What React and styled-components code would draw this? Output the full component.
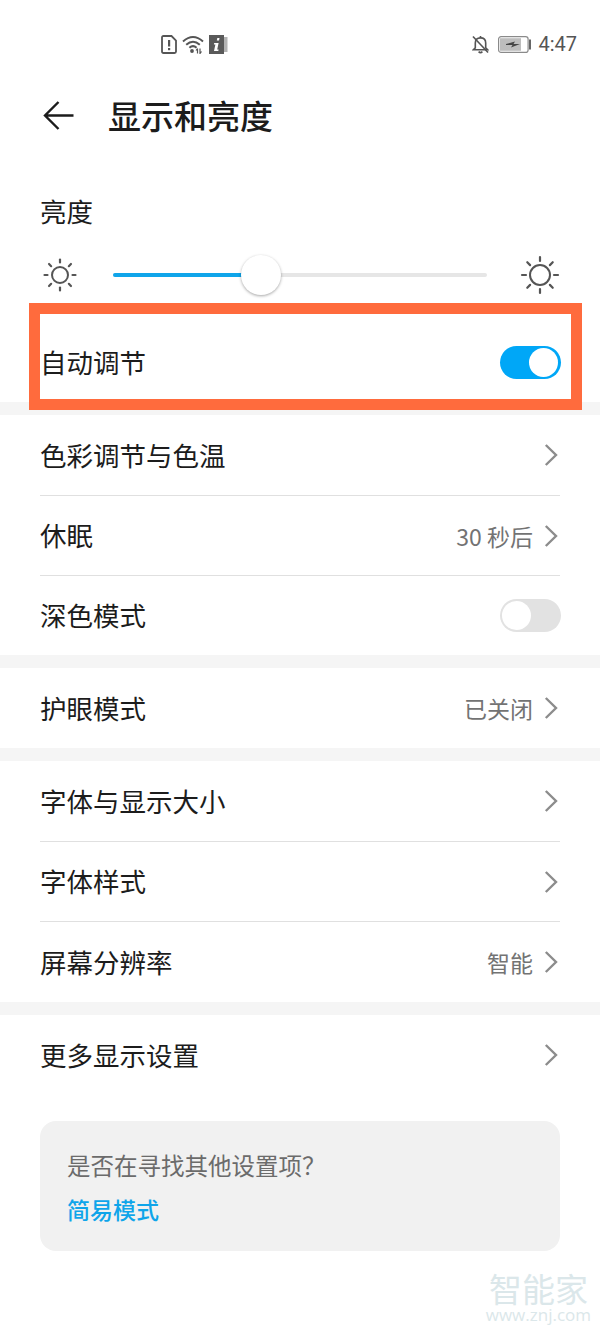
import styled, { createGlobalStyle } from "styled-components";

const GlobalStyle = createGlobalStyle`
  html, body {
    margin: 0;
    padding: 0;
    background: #fff;
    font-family: "Noto Sans CJK SC", "Noto Sans", sans-serif;
  }
`;

const Sun = ({ size, ring, inner, outer }) => {
  const c = size / 2;
  const rays = [0, 45, 90, 135, 180, 225, 270, 315];
  return (
    <svg width={size} height={size} viewBox={`0 0 ${size} ${size}`}>
      <circle cx={c} cy={c} r={ring} fill="none" stroke="#555" strokeWidth="2" />
      {rays.map((deg) => (
        <line
          key={deg}
          x1={c}
          y1={c - inner}
          x2={c}
          y2={c - outer}
          stroke="#555"
          strokeWidth="2.2"
          strokeLinecap="round"
          transform={`rotate(${deg} ${c} ${c})`}
        />
      ))}
    </svg>
  );
};

const Chevron = () => (
  <svg width="14" height="24" viewBox="0 0 14 24">
    <path d="M1.8 2 L12 12 L1.8 22" fill="none" stroke="#8c8c8c" strokeWidth="2.4" />
  </svg>
);

const BackArrow = () => (
  <svg width="32" height="32" viewBox="0 0 32 32">
    <path
      d="M30.5 15.5 H2.5 M15.5 2 L2 15.5 L15.5 29"
      fill="none"
      stroke="#1c1c1c"
      strokeWidth="2.4"
    />
  </svg>
);

const SimAlert = () => (
  <svg width="16" height="19" viewBox="0 0 16 19">
    <path
      d="M2.5 1 H10.5 L15 5.5 V16.5 Q15 18 13.5 18 H2.5 Q1 18 1 16.5 V2.5 Q1 1 2.5 1 Z"
      fill="none"
      stroke="#555"
      strokeWidth="1.8"
    />
    <rect x="7" y="5" width="2.2" height="6.5" fill="#555" />
    <rect x="7" y="13" width="2.2" height="2.2" fill="#555" />
  </svg>
);

const WifiIcon = () => (
  <svg width="22" height="19" viewBox="0 0 22 19">
    <g fill="none" stroke="#555" strokeWidth="2">
      <path d="M1 6.5 Q11 -2.5 21 6.5" />
      <path d="M4.2 9.8 Q11 3.6 17.8 9.8" />
      <path d="M7.4 12.8 Q11 9.4 14.6 12.8" />
    </g>
    <circle cx="10" cy="16" r="1.9" fill="#555" />
    <path
      d="M15.5 13.5 V18.5 M14 15.5 L15.5 13.5 M18 13.5 V18.5 L19.5 16.5"
      fill="none"
      stroke="#555"
      strokeWidth="1.2"
    />
  </svg>
);

const InfoIcon = () => (
  <svg width="19" height="19" viewBox="0 0 19 19">
    <rect x="14" y="2" width="4.5" height="15" fill="#b4b4b4" />
    <rect x="0" y="0" width="15" height="19" fill="#5a5a5a" />
    <path d="M8.3 3 H10.5 L10 5.4 H7.8 Z" fill="#fff" />
    <path
      d="M5.2 8 H9.6 L8.2 14.4 H9.6 L9.3 16 H5 L6.4 9.5 H4.9 Z"
      fill="#fff"
    />
  </svg>
);

const BellOff = () => (
  <svg width="17" height="19" viewBox="0 0 18 20">
    <path
      d="M3.5 13.5 V8.5 Q3.5 3 9 3 Q14.5 3 14.5 8.5 V13.5 L16.5 15.5 H1.5 Z"
      fill="none"
      stroke="#555"
      strokeWidth="1.7"
    />
    <path d="M9 1 V3 M7 17.5 Q9 19.5 11 17.5" fill="none" stroke="#555" strokeWidth="1.7" />
    <path d="M1 1.5 L17 18.5" stroke="#555" strokeWidth="1.7" />
  </svg>
);

const BatteryIcon = () => (
  <svg width="33" height="17" viewBox="0 0 33 17">
    <rect x="0.6" y="0.6" width="29.5" height="15.8" rx="2.5" fill="none" stroke="#8a8a8a" strokeWidth="1.2" />
    <rect x="2" y="2.2" width="21" height="12.6" fill="#bdbdbd" />
    <path d="M8 8 L17 5.5 L15.5 8 H22 L13 11.5 L14.5 9 H8 Z" fill="#444" />
    <rect x="31" y="3.5" width="2" height="10" fill="#666" />
  </svg>
);

const Watermark = () => (
  <Mark>
    <MarkName>智能家</MarkName>
    <MarkUrl>www.znj.com</MarkUrl>
  </Mark>
);

function Row({ label, value, last, height = 80, children }) {
  return (
    <RowWrap $last={last} $height={height}>
      <RowLabel>{label}</RowLabel>
      {children || (
        <RowRight>
          {value && <RowValue>{value}</RowValue>}
          <Chevron />
        </RowRight>
      )}
    </RowWrap>
  );
}

export default function App() {
  return (
    <Page>
      <GlobalStyle />
      <StatusBar>
        <StatusLeft>
          <SimAlert />
          <WifiIcon />
          <InfoIcon />
        </StatusLeft>
        <StatusRight>
          <BellOff />
          <BatteryIcon />
          <Time>4:47</Time>
        </StatusRight>
      </StatusBar>

      <Header>
        <BackArrow />
        <Title>显示和亮度</Title>
      </Header>

      <BrightnessLabel>亮度</BrightnessLabel>
      <SliderRow>
        <SunSlot>
          <Sun size={40} ring={8} inner={12.5} outer={15.5} />
        </SunSlot>
        <Track>
          <TrackFill style={{ width: "148px" }} />
          <Thumb style={{ left: "128px" }} />
        </Track>
        <SunSlot>
          <Sun size={40} ring={10} inner={14} outer={18} />
        </SunSlot>
      </SliderRow>

      <AutoRow>
        <RowLabel>自动调节</RowLabel>
        <Toggle $on />
        <Highlight />
      </AutoRow>

      <Band />
      <Row label="色彩调节与色温" height={81} />
      <Row label="休眠" value="30 秒后" />
      <Row label="深色模式" height={79} last>
        <Toggle />
      </Row>

      <Band />
      <Row label="护眼模式" value="已关闭" last />

      <Band />
      <Row label="字体与显示大小" height={81} />
      <Row label="字体样式" />
      <Row label="屏幕分辨率" value="智能" last />

      <Band />
      <Row label="更多显示设置" last />

      <HintCard>
        <HintText>是否在寻找其他设置项？</HintText>
        <HintLink>简易模式</HintLink>
      </HintCard>

      <Watermark />
    </Page>
  );
}

const Page = styled.div`
  position: relative;
  width: 600px;
  height: 1333px;
  overflow: hidden;
  background: #fff;
  color: #1c1c1c;
`;

const StatusBar = styled.div`
  height: 88px;
  display: flex;
  justify-content: space-between;
  align-items: center;
  padding: 0 23px 0 161px;
  box-sizing: border-box;
`;

const StatusLeft = styled.div`
  display: flex;
  align-items: center;
  gap: 5px;
`;

const StatusRight = styled.div`
  display: flex;
  align-items: center;
  gap: 9px;
`;

const Time = styled.span`
  margin-left: -2px;
  font-family: "Roboto", sans-serif;
  font-size: 20px;
  color: #555;
`;

const Header = styled.div`
  height: 56px;
  display: flex;
  align-items: center;
  gap: 33px;
  padding-left: 43px;
`;

const Title = styled.h1`
  margin: -2px 0 0;
  font-size: 33px;
  font-weight: 500;
  line-height: 56px;
  color: #1c1c1c;
`;

const BrightnessLabel = styled.div`
  margin-top: 47px;
  padding-left: 40px;
  font-size: 26.5px;
  line-height: 40px;
`;

const SliderRow = styled.div`
  margin-top: 24px;
  height: 40px;
  display: flex;
  align-items: center;
  justify-content: space-between;
  padding: 0 40px;
`;

const SunSlot = styled.div`
  width: 40px;
  height: 40px;
  flex: none;
`;

const Track = styled.div`
  position: relative;
  width: 374px;
  height: 4px;
  border-radius: 2px;
  background: #e6e6e6;
`;

const TrackFill = styled.div`
  height: 100%;
  border-radius: 2px;
  background: #0fa5ea;
`;

const Thumb = styled.div`
  position: absolute;
  top: -18px;
  width: 40px;
  height: 40px;
  border-radius: 50%;
  background: #fff;
  box-shadow: 0 1px 3px rgba(0, 0, 0, 0.35);
`;

const AutoRow = styled.div`
  position: relative;
  margin-top: 27px;
  height: 80px;
  padding: 0 40px;
  display: flex;
  align-items: center;
  justify-content: space-between;
`;

const Highlight = styled.div`
  position: absolute;
  left: 29px;
  top: -19px;
  width: 553px;
  height: 107px;
  box-sizing: border-box;
  border: 11px solid #ff6b3d;
  z-index: 2;
`;

const Band = styled.div`
  height: 13px;
  background: #f5f5f5;
`;

const RowWrap = styled.div`
  height: ${(p) => p.$height}px;
  margin: 0 40px;
  display: flex;
  align-items: center;
  justify-content: space-between;
  box-sizing: border-box;
  border-bottom: ${(p) => (p.$last ? "none" : "1px solid #e0e0e0")};
`;

const RowLabel = styled.span`
  font-size: 26.5px;
  line-height: 40px;
  margin-top: -1px;
  color: #1c1c1c;
`;

const RowRight = styled.div`
  display: flex;
  align-items: center;
  gap: 11px;
  margin-right: 2px;
`;

const RowValue = styled.span`
  font-size: 23px;
  color: #737373;
`;

const Toggle = styled.div`
  position: relative;
  width: 61px;
  height: 33px;
  margin-right: -1px;
  border-radius: 17px;
  background: ${(p) => (p.$on ? "#00a7f7" : "#e2e2e2")};
  &::after {
    content: "";
    position: absolute;
    top: 2px;
    left: ${(p) => (p.$on ? "29px" : "2px")};
    width: 29px;
    height: 29px;
    border-radius: 50%;
    background: #fff;
  }
`;

const HintCard = styled.div`
  margin: 26px 40px 0;
  height: 130px;
  box-sizing: border-box;
  padding: 26px 27px;
  border-radius: 16px;
  background: #f1f1f1;
`;

const HintText = styled.div`
  font-size: 23.5px;
  line-height: 36px;
  color: #6b6b6b;
`;

const HintLink = styled.div`
  margin-top: 8px;
  font-size: 23px;
  line-height: 36px;
  font-weight: 500;
  color: #0fa5ea;
`;

const Mark = styled.div`
  position: absolute;
  right: 9px;
  top: 1270px;
  text-align: center;
  color: #dbe7ea;
`;

const MarkName = styled.div`
  font-size: 33px;
  line-height: 36px;
`;

const MarkUrl = styled.div`
  font-family: "Open Sans", sans-serif;
  font-size: 17px;
  line-height: 18px;
`;
